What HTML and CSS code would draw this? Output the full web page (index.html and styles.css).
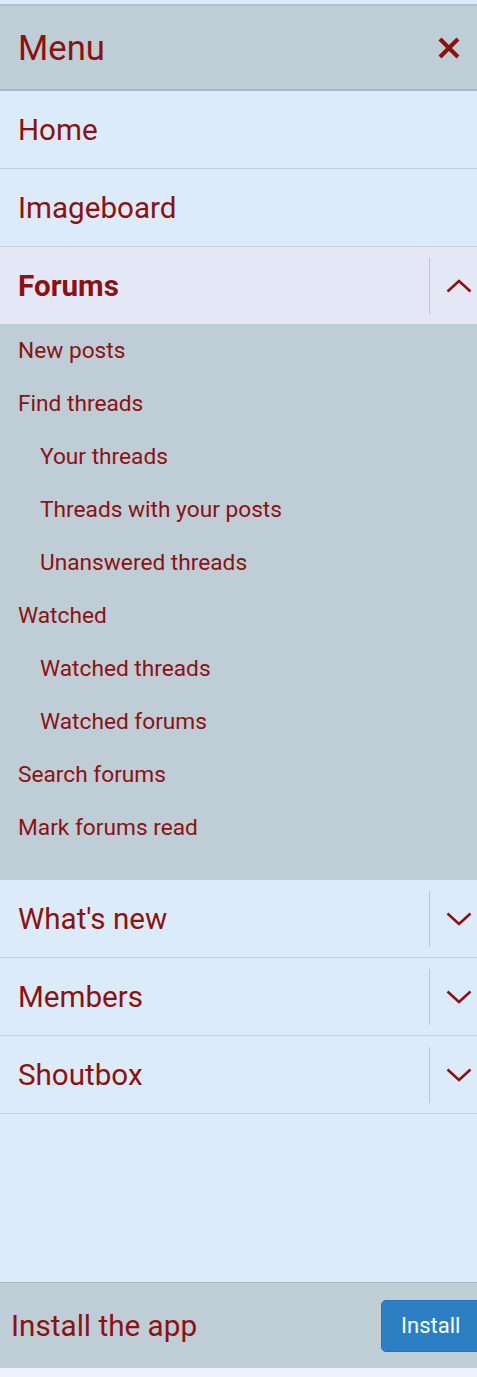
FILE: index.html
```html
<!DOCTYPE html>
<html lang="en">
<head>
  <meta charset="UTF-8">
  <title>Menu</title>
  <meta name="viewport" content="width=device-width, initial-scale=1.0">
  <link rel="stylesheet" href="styles.css">
</head>
<body>
  <div class="menu">
    <div class="menu-header">
      <span class="menu-title">Menu</span>
      <span class="menu-close">
        <svg width="24" height="24" viewBox="0 0 24 24"><path d="M3 3 L21 21 M21 3 L3 21" stroke="currentColor" stroke-width="4.2" fill="none"/></svg>
      </span>
    </div>

    <div class="nav-row"><a class="nav-link">Home</a></div>
    <div class="nav-row"><a class="nav-link">Imageboard</a></div>

    <!-- open section -->
    <div class="nav-row is-open">
      <a class="nav-link">Forums</a>
      <span class="nav-toggle">
        <svg width="26" height="14" viewBox="0 0 26 14"><polyline points="1.5,12.5 13,2 24.5,12.5" stroke="currentColor" stroke-width="2.6" fill="none"/></svg>
      </span>
    </div>
    <ul class="sub-list">
      <li><a>New posts</a></li>
      <li><a>Find threads</a></li>
      <li class="indent"><a>Your threads</a></li>
      <li class="indent"><a>Threads with your posts</a></li>
      <li class="indent"><a>Unanswered threads</a></li>
      <li><a>Watched</a></li>
      <li class="indent"><a>Watched threads</a></li>
      <li class="indent"><a>Watched forums</a></li>
      <li><a>Search forums</a></li>
      <li><a>Mark forums read</a></li>
    </ul>

    <div class="nav-row">
      <a class="nav-link">What's new</a>
      <span class="nav-toggle">
        <svg width="26" height="14" viewBox="0 0 26 14"><polyline points="1.5,1.5 13,12 24.5,1.5" stroke="currentColor" stroke-width="2.6" fill="none"/></svg>
      </span>
    </div>
    <div class="nav-row">
      <a class="nav-link">Members</a>
      <span class="nav-toggle">
        <svg width="26" height="14" viewBox="0 0 26 14"><polyline points="1.5,1.5 13,12 24.5,1.5" stroke="currentColor" stroke-width="2.6" fill="none"/></svg>
      </span>
    </div>
    <div class="nav-row">
      <a class="nav-link">Shoutbox</a>
      <span class="nav-toggle">
        <svg width="26" height="14" viewBox="0 0 26 14"><polyline points="1.5,1.5 13,12 24.5,1.5" stroke="currentColor" stroke-width="2.6" fill="none"/></svg>
      </span>
    </div>

    <div class="menu-spacer"></div>

    <div class="install-bar">
      <span class="install-text">Install the app</span>
      <button class="install-button">Install</button>
    </div>
  </div>
</body>
</html>
```

FILE: styles.css
```css
html, body {
  margin: 0;
  padding: 0;
}

body {
  font-family: Roboto, "Noto Sans", sans-serif;
  background-color: #eef2fc;
  color: #8c1111;
  overflow-x: hidden;
}

.menu {
  width: 477px;
  background-color: #dcebf9;
  padding-top: 4px;
}

.menu-header {
  display: flex;
  align-items: center;
  justify-content: space-between;
  height: 83px;
  padding: 0 16px 0 18px;
  background-color: #bfcdd7;
  border-top: 2px solid #b2c2cd;
  border-bottom: 2px solid #a9b8c3;
}

.menu-title {
  font-size: 34.7px;
}

.menu-close {
  display: flex;
  color: #8c1111;
}

.nav-row {
  display: flex;
  align-items: center;
  height: 77px;
  border-bottom: 1px solid #c3d2dd;
}

.nav-link {
  flex: 1;
  padding-left: 18px;
  font-size: 29.6px;
}

.nav-row.is-open {
  background-color: #e4e8f6;
  border-bottom: none;
}

.nav-row.is-open .nav-link {
  font-weight: bold;
}

.nav-toggle {
  display: flex;
  align-items: center;
  justify-content: center;
  width: 48px;
  height: 56px;
  padding-left: 11px;
  box-sizing: border-box;
  border-left: 1px solid #b8c6d1;
}

.nav-row.is-open .nav-toggle {
  border-left-color: #d2b9c6;
}

.sub-list {
  list-style: none;
  margin: 0;
  padding: 0 0 26px 0;
  background-color: #bfcdd7;
}

.sub-list li {
  height: 53px;
  line-height: 53px;
  padding-left: 18px;
  font-size: 22.7px;
}

.sub-list li.indent {
  padding-left: 40px;
}

.menu-spacer {
  height: 168px;
}

.install-bar {
  display: flex;
  align-items: center;
  justify-content: space-between;
  height: 85px;
  padding-left: 11px;
  background-color: #bfcdd7;
  border-top: 1px solid #a9b8c3;
}

.install-text {
  font-size: 29.7px;
}

.install-button {
  width: 106px;
  height: 52px;
  margin-right: -10px;
  padding: 0 0 0 19px;
  text-align: left;
  font-family: Roboto, "Noto Sans", sans-serif;
  font-size: 22px;
  color: #fff;
  background-color: #2b7fc2;
  border: 1px solid #2a72ad;
  border-radius: 5px;
}
```
